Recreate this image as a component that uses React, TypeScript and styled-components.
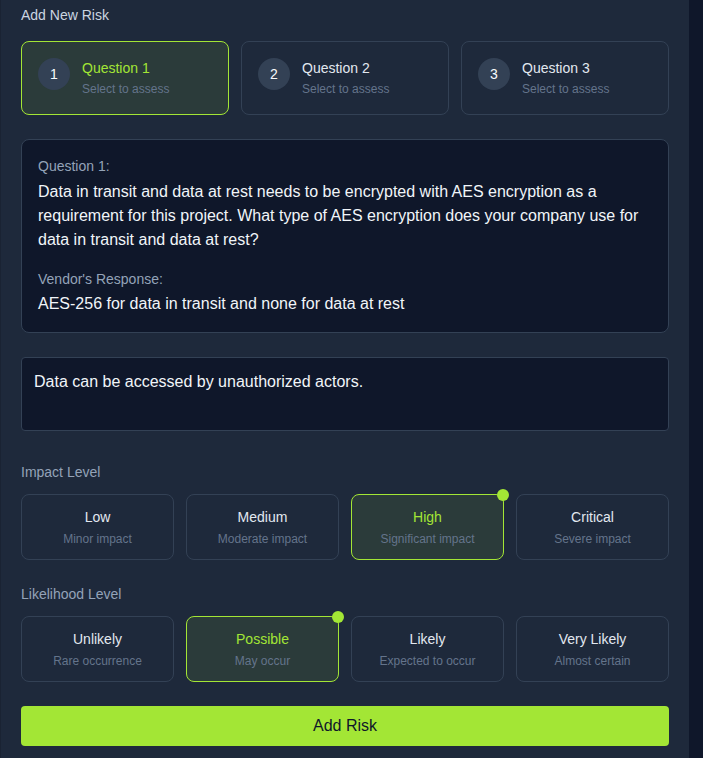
import React, { useState } from "react";
import styled, { createGlobalStyle } from "styled-components";

const GlobalStyle = createGlobalStyle`
  * { box-sizing: border-box; }
  html, body { margin: 0; padding: 0; background: #0f172a; }
  body { font-family: "Liberation Sans", Arial, sans-serif; }
`;

const LIME = "#a3e635";

const Panel = styled.div`
  width: 689px;
  min-height: 758px;
  background: #1e293b;
  border-left: 1px solid #1a2333;
  padding: 5px 20px 20px 20px;
  display: flex;
  flex-direction: column;
`;

const Title = styled.div`
  font-size: 14px;
  line-height: 20px;
  color: #cbd5e1;
  margin-bottom: 16px;
`;

const QuestionRow = styled.div`
  display: grid;
  grid-template-columns: repeat(3, 1fr);
  gap: 12px;
  margin-bottom: 24px;
`;

const QCard = styled.button<{ $active: boolean }>`
  display: flex;
  align-items: flex-start;
  gap: 12px;
  padding: 16px;
  height: 74px;
  border-radius: 8px;
  border: 1px solid ${(p) => (p.$active ? LIME : "#334155")};
  background: ${(p) => (p.$active ? "rgba(163, 230, 53, 0.1)" : "transparent")};
  text-align: left;
  cursor: pointer;
  font-family: inherit;
`;

const Num = styled.div`
  width: 32px;
  height: 32px;
  border-radius: 50%;
  background: #334155;
  color: #f8fafc;
  font-size: 14px;
  display: flex;
  align-items: center;
  justify-content: center;
  flex-shrink: 0;
`;

const QText = styled.div`
  display: flex;
  flex-direction: column;
  gap: 3px;
`;

const QTitle = styled.div<{ $active: boolean }>`
  font-size: 14px;
  line-height: 20px;
  color: ${(p) => (p.$active ? LIME : "#e2e8f0")};
`;

const QSub = styled.div`
  font-size: 12px;
  line-height: 16px;
  color: #64748b;
`;

const QuestionBox = styled.div`
  background: #0f172a;
  border: 1px solid #334155;
  border-radius: 8px;
  padding: 16px;
  margin-bottom: 24px;
`;

const BoxLabel = styled.div<{ $top?: boolean }>`
  font-size: 14px;
  line-height: 20px;
  color: #94a3b8;
  margin-bottom: ${(p) => (p.$top ? "4px" : "3px")};
`;

const BoxText = styled.div<{ $spaced?: boolean }>`
  font-size: 16px;
  line-height: 24px;
  color: #f1f5f9;
  margin-bottom: ${(p) => (p.$spaced ? "17px" : "0")};
`;

const TextArea = styled.textarea`
  display: block;
  width: 100%;
  height: 74px;
  resize: none;
  background: #0f172a;
  border: 1px solid #334155;
  border-radius: 4px;
  padding: 12px;
  font-family: inherit;
  font-size: 16px;
  line-height: 24px;
  color: #f1f5f9;
  outline: none;
  margin-bottom: 31px;
`;

const SectionLabel = styled.div`
  font-size: 14px;
  line-height: 20px;
  color: #94a3b8;
  margin-bottom: 12px;
`;

const LevelRow = styled.div`
  display: grid;
  grid-template-columns: repeat(4, 1fr);
  gap: 12px;
  margin-bottom: 24px;
`;

const LevelCard = styled.button<{ $active: boolean }>`
  position: relative;
  height: 66px;
  padding: 12px;
  border-radius: 8px;
  border: 1px solid ${(p) => (p.$active ? LIME : "#334155")};
  background: ${(p) => (p.$active ? "rgba(163, 230, 53, 0.1)" : "transparent")};
  display: flex;
  flex-direction: column;
  align-items: center;
  gap: 4px;
  cursor: pointer;
  font-family: inherit;
`;

const LevelTitle = styled.div<{ $active: boolean }>`
  font-size: 14px;
  line-height: 20px;
  color: ${(p) => (p.$active ? LIME : "#e2e8f0")};
`;

const LevelSub = styled.div`
  font-size: 12px;
  line-height: 16px;
  color: #64748b;
`;

const Dot = styled.span`
  position: absolute;
  top: -6px;
  right: -6px;
  width: 12px;
  height: 12px;
  border-radius: 50%;
  background: ${LIME};
`;

const SubmitButton = styled.button`
  width: 100%;
  height: 40px;
  border: none;
  border-radius: 4px;
  background: ${LIME};
  color: #0f172a;
  font-family: inherit;
  font-size: 16px;
  cursor: pointer;
`;

const questions = [1, 2, 3];

const impacts = [
  { t: "Low", s: "Minor impact" },
  { t: "Medium", s: "Moderate impact" },
  { t: "High", s: "Significant impact" },
  { t: "Critical", s: "Severe impact" },
];

const likelihoods = [
  { t: "Unlikely", s: "Rare occurrence" },
  { t: "Possible", s: "May occur" },
  { t: "Likely", s: "Expected to occur" },
  { t: "Very Likely", s: "Almost certain" },
];

export default function App() {
  const [q, setQ] = useState(1);
  const [impact, setImpact] = useState("High");
  const [likelihood, setLikelihood] = useState("Possible");
  const [desc, setDesc] = useState("Data can be accessed by unauthorized actors.");

  return (
    <>
      <GlobalStyle />
      <Panel>
        <Title>Add New Risk</Title>
        <QuestionRow>
          {questions.map((n) => (
            <QCard key={n} $active={q === n} onClick={() => setQ(n)}>
              <Num>{n}</Num>
              <QText>
                <QTitle $active={q === n}>Question {n}</QTitle>
                <QSub>Select to assess</QSub>
              </QText>
            </QCard>
          ))}
        </QuestionRow>
        <QuestionBox>
          <BoxLabel $top>Question 1:</BoxLabel>
          <BoxText $spaced>
            Data in transit and data at rest needs to be encrypted with AES encryption as a
            requirement for this project. What type of AES encryption does your company use for
            data in transit and data at rest?
          </BoxText>
          <BoxLabel>Vendor's Response:</BoxLabel>
          <BoxText>AES-256 for data in transit and none for data at rest</BoxText>
        </QuestionBox>
        <TextArea value={desc} onChange={(e) => setDesc(e.target.value)} />
        <SectionLabel>Impact Level</SectionLabel>
        <LevelRow>
          {impacts.map((i) => (
            <LevelCard key={i.t} $active={impact === i.t} onClick={() => setImpact(i.t)}>
              <LevelTitle $active={impact === i.t}>{i.t}</LevelTitle>
              <LevelSub>{i.s}</LevelSub>
              {impact === i.t && <Dot />}
            </LevelCard>
          ))}
        </LevelRow>
        <SectionLabel>Likelihood Level</SectionLabel>
        <LevelRow>
          {likelihoods.map((i) => (
            <LevelCard key={i.t} $active={likelihood === i.t} onClick={() => setLikelihood(i.t)}>
              <LevelTitle $active={likelihood === i.t}>{i.t}</LevelTitle>
              <LevelSub>{i.s}</LevelSub>
              {likelihood === i.t && <Dot />}
            </LevelCard>
          ))}
        </LevelRow>
        <SubmitButton>Add Risk</SubmitButton>
      </Panel>
    </>
  );
}
